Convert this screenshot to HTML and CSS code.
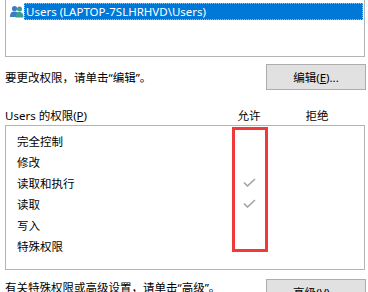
FILE: index.html
```html
<!DOCTYPE html>
<html lang="zh-CN">
<head>
    <meta charset="UTF-8">
    <meta name="viewport" content="width=device-width, initial-scale=1.0">
    <title>Users 的权限</title>
    <link rel="stylesheet" href="styles.css">
</head>
<body>
    <div class="page">
        <div class="user-list">
            <div class="user-row">
                <svg class="user-icon" width="14" height="13" viewBox="0 0 14 13">
                    <circle cx="4.5" cy="3.5" r="2.6" fill="#3b7cc4"/>
                    <path d="M0 12 C0 7.5 2 6.5 4.5 6.5 C7 6.5 9 7.5 9 12 Z" fill="#3b7cc4"/>
                    <circle cx="9.5" cy="4" r="2.5" fill="#3f9a8f"/>
                    <path d="M5.5 12.5 C5.5 8.5 7.2 7 9.5 7 C11.8 7 13.5 8.5 13.5 12.5 Z" fill="#3f9a8f"/>
                </svg>
                <span class="user-name">Users (LAPTOP-7SLHRHVD\Users)</span>
            </div>
        </div>

        <div class="action-row">
            <span>要更改权限，请单击“编辑”。</span>
            <button type="button" class="btn">编辑(<u>E</u>)...</button>
        </div>

        <div class="perm-head">
            <span>Users 的权限(<u>P</u>)</span>
            <span class="col">允许</span>
            <span class="col">拒绝</span>
        </div>

        <div class="perm-box">
            <div class="perm-row"><span>完全控制</span><span class="col"></span><span class="col"></span></div>
            <div class="perm-row"><span>修改</span><span class="col"></span><span class="col"></span></div>
            <div class="perm-row"><span>读取和执行</span><span class="col"><svg class="check" width="13" height="9" viewBox="0 0 13 9"><polyline points="1,4.5 4.5,8 12,1" fill="none" stroke="#a3a3a3" stroke-width="1.6"/></svg></span><span class="col"></span></div>
            <div class="perm-row"><span>读取</span><span class="col"><svg class="check" width="13" height="9" viewBox="0 0 13 9"><polyline points="1,4.5 4.5,8 12,1" fill="none" stroke="#a3a3a3" stroke-width="1.6"/></svg></span><span class="col"></span></div>
            <div class="perm-row"><span>写入</span><span class="col"></span><span class="col"></span></div>
            <div class="perm-row"><span>特殊权限</span><span class="col"></span><span class="col"></span></div>
            <div class="highlight"></div>
        </div>

        <div class="action-row bottom">
            <span>有关特殊权限或高级设置，请单击“高级”。</span>
            <button type="button" class="btn">高级(<u>V</u>)...</button>
        </div>
    </div>
</body>
</html>
```

FILE: styles.css
```css
body {
  margin: 0;
  padding: 0;
  background-color: #ffffff;
  font-family: "Noto Sans", "Noto Sans CJK SC", sans-serif;
  font-size: 11.5px;
  color: #000000;
  overflow: hidden;
}

.page {
  width: 360px;
  padding-left: 5px;
}

.user-list {
  height: 53px;
  margin-top: -1px;
  border: 1px solid #b4b4b4;
  border-top: none;
  padding-top: 4px;
  box-sizing: content-box;
}

.user-row {
  display: flex;
  align-items: center;
  height: 17px;
  padding-left: 4px;
}

.user-name {
  flex: 1;
  height: 17px;
  line-height: 17px;
  margin-right: 1px;
  padding-left: 2px;
  background-color: #0078d7;
  color: #ffffff;
  outline: 1px dotted #e8b070;
  outline-offset: -1px;
}

.action-row {
  display: flex;
  justify-content: space-between;
  align-items: center;
  height: 26px;
  margin-top: 7px;
}

.btn {
  width: 100px;
  height: 26px;
  margin-right: -1px;
  border: 1px solid #adadad;
  background-color: #e1e1e1;
  font-family: inherit;
  font-size: 11.5px;
  color: #000000;
  padding: 0;
}

.perm-head,
.perm-row {
  display: grid;
  grid-template-columns: 1fr 36px 36px;
  column-gap: 32px;
  align-items: center;
}

.perm-head {
  height: 18px;
  margin-top: 16px;
  padding-right: 30px;
}

.col {
  display: flex;
  justify-content: center;
}

.perm-box {
  position: relative;
  height: 145px;
  border: 1px solid #b4b4b4;
  padding-top: 4px;
  box-sizing: border-box;
  margin-top: 1px;
}

.perm-row {
  height: 21px;
  padding-left: 11px;
  padding-right: 29px;
}

.check {
  display: block;
  margin-top: -1px;
}

.highlight {
  position: absolute;
  left: 226px;
  top: 1px;
  width: 30px;
  height: 119px;
  border: 3px solid #ef3a3a;
}

.action-row.bottom {
  margin-top: 9px;
  align-items: flex-start;
}

.action-row.bottom span {
  margin-top: 0;
}
```
